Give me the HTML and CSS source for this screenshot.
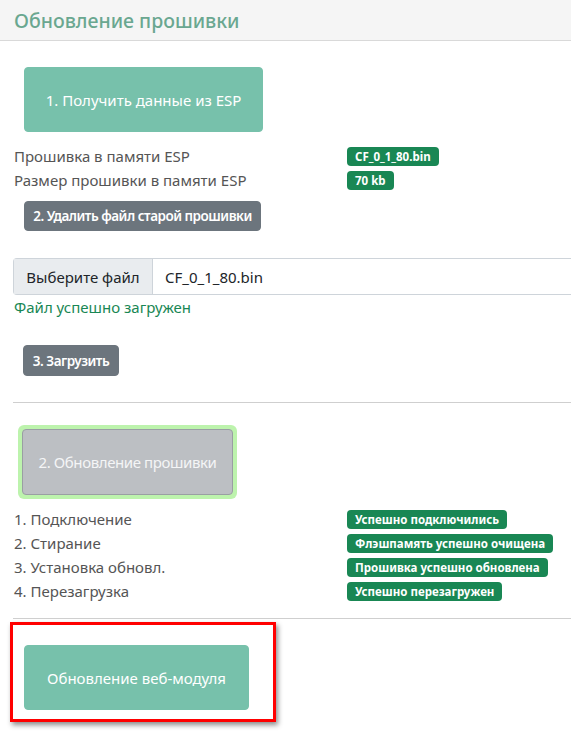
FILE: index.html
```html
<!DOCTYPE html>
<html lang="ru">
<head>
<meta charset="utf-8">
<title>Обновление прошивки</title>
<link rel="stylesheet" href="styles.css">
</head>
<body>
<header class="panel-head">
  <h1 class="panel-title">Обновление прошивки</h1>
</header>
<main class="panel-body">
  <button class="btn btn-lg btn-teal btn-get">1. Получить данные из ESP</button>
  <div class="info-grid">
    <span class="label">Прошивка в памяти ESP</span><span class="badge">CF_0_1_80.bin</span>
    <span class="label">Размер прошивки в памяти ESP</span><span class="badge">70 kb</span>
  </div>
  <button class="btn btn-sm btn-gray btn-delete">2. Удалить файл старой прошивки</button>
  <div class="file-input">
    <span class="file-btn">Выберите файл</span>
    <span class="file-name">CF_0_1_80.bin</span>
  </div>
  <p class="success-text">Файл успешно загружен</p>
  <button class="btn btn-sm btn-gray btn-upload">3. Загрузить</button>
  <hr class="divider divider-1">
  <div class="glow">
    <button class="btn btn-lg btn-disabled">2. Обновление прошивки</button>
  </div>
  <div class="info-grid steps">
    <span class="label">1. Подключение</span><span class="badge">Успешно подключились</span>
    <span class="label">2. Стирание</span><span class="badge">Флэшпамять успешно очищена</span>
    <span class="label">3. Установка обновл.</span><span class="badge">Прошивка успешно обновлена</span>
    <span class="label">4. Перезагрузка</span><span class="badge">Успешно перезагружен</span>
  </div>
  <hr class="divider divider-2">
  <div class="highlight">
    <button class="btn btn-lg btn-teal btn-web">Обновление веб-модуля</button>
  </div>
</main>
</body>
</html>
```

FILE: styles.css
```css
* { box-sizing: border-box; }
html, body { margin: 0; padding: 0; background: #fff; }
body {
  font-family: "Noto Sans", "Open Sans", sans-serif;
  color: #555;
  width: 571px;
  overflow: hidden;
}
.panel-head {
  height: 41px;
  background: #f5f5f5;
  border-bottom: 1px solid #d9d9d9;
  padding: 0 14px;
  display: flex;
  align-items: center;
}
.panel-title {
  margin: 0;
  font-size: 19.5px;
  font-weight: 500;
  color: #6aa790;
}
.panel-body {
  padding: 26px 0 0 13px;
  display: flex;
  flex-direction: column;
  align-items: flex-start;
}
.btn {
  font-family: inherit;
  border: 1px solid transparent;
  border-radius: 4px;
  color: #fff;
  cursor: pointer;
  display: inline-flex;
  align-items: center;
  justify-content: center;
  white-space: nowrap;
}
.btn-lg {
  height: 65px;
  font-size: 15px;
}
.btn-teal { background: #77c1ab; border-color: #77c1ab; }
.btn-get { width: 239px; margin-left: 11px; }
.btn-sm {
  height: 30px;
  font-size: 13.5px;
  font-weight: 600;
  letter-spacing: -0.5px;
  padding: 0 8px;
}
.btn-gray { background: #6c757d; border-color: #6c757d; }
.info-grid {
  display: grid;
  grid-template-columns: 333px auto;
  align-items: center;
  margin: 12px 0 0 1px;
  font-size: 15px;
  line-height: 24px;
}
.label { color: #555; }
.badge {
  justify-self: start;
  background: #198754;
  color: #fff;
  font-size: 11.5px;
  font-weight: 700;
  line-height: 19px;
  height: 19px;
  padding: 0 8px;
  border-radius: 4px;
}
.btn-delete { margin: 9px 0 0 11px; width: 237px; }
.file-input {
  margin-top: 27px;
  width: 558px;
  height: 37px;
  display: flex;
  border: 1px solid #ced4da;
  border-right: 0;
  border-radius: 4px 0 0 4px;
  font-size: 15px;
  color: #212529;
}
.file-btn {
  width: 139px;
  background: #e9ecef;
  border-right: 1px solid #ced4da;
  display: flex;
  align-items: center;
  justify-content: center;
}
.file-name {
  padding-left: 12px;
  display: flex;
  align-items: center;
}
.success-text {
  margin: 0 0 0 1px;
  font-size: 15px;
  line-height: 25px;
  color: #198754;
}
.btn-upload { margin: 25px 0 0 10px; width: 96px; height: 31px; }
.divider {
  width: 558px;
  border: 0;
  border-top: 1px solid #cfcfcf;
  margin: 0;
}
.divider-1 { margin-top: 26px; }
.glow {
  margin: 22px 0 0 5px;
  padding: 4px;
  background: #bdf3ad;
  border-radius: 6px;
}
.btn-disabled {
  width: 211px;
  height: 66px;
  background: #bcbfc3;
  border-color: #9a9ea3;
  color: #f4f5f6;
  letter-spacing: -0.4px;
}
.steps { margin-top: 8px; }
.steps .badge { margin: 2.5px 0; }
.divider-2 { margin-top: 15px; }
.highlight {
  margin: 3px 0 10px -3px;
  border: 3px solid #ff0000;
  padding: 20px 24px 9px 11px;
  box-shadow: 2px 3px 5px rgba(0, 0, 0, 0.45);
}
.btn-web { width: 225px; }
```
